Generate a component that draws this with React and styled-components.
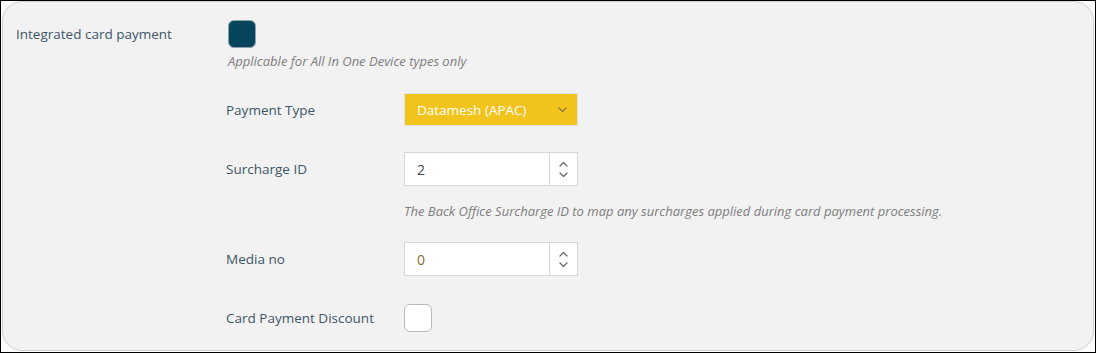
import React from "react";
import styled, { createGlobalStyle } from "styled-components";

const GlobalStyle = createGlobalStyle`
  html, body {
    margin: 0;
    padding: 0;
    background: #fff;
  }
  * {
    box-sizing: border-box;
  }
`;

const Frame = styled.div`
  width: 1096px;
  height: 353px;
  border: 1px solid #000;
  padding: 0 1px 1px 1px;
  background: #fff;
  display: flex;
`;

const Panel = styled.div`
  flex: 1;
  background: #f2f2f2;
  border: 1px solid #cdcdcd;
  border-radius: 20px;
  padding: 18px 13px;
  font-family: "Open Sans", "Liberation Sans", Arial, sans-serif;
  color: #3d5669;
`;

const TopRow = styled.div`
  display: grid;
  grid-template-columns: 212px 1fr;
`;

const Label = styled.div`
  font-size: 13.5px;
  line-height: 28px;
  color: #3d5669;
`;

const Stack = styled.div`
  display: flex;
  flex-direction: column;
  align-items: flex-start;
`;

const Check = styled.div`
  width: 28px;
  height: 28px;
  border-radius: 6px;
  border: 1px solid ${(p) => (p.$on ? "#8aa0ab" : "#b9b9b9")};
  background: ${(p) => (p.$on ? "#07445e" : "#fff")};
`;

const Hint = styled.div`
  font-size: 13px;
  font-style: italic;
  color: #7d7d7d;
  line-height: 16px;
  margin-top: ${(p) => p.$top || 0}px;
  margin-left: ${(p) => p.$left || 0}px;
`;

const Sub = styled.div`
  margin-left: 210px;
  margin-top: 24px;
  display: flex;
  flex-direction: column;
`;

const Row = styled.div`
  display: grid;
  grid-template-columns: 178px 174px;
  align-items: center;
  margin-top: ${(p) => p.$top || 0}px;
`;

const Select = styled.div`
  height: 33px;
  background: #f2c31c;
  border: 1px solid #e2e2e2;
  display: flex;
  align-items: center;
  justify-content: space-between;
  padding: 0 10px 0 12px;
  color: #fff;
  font-size: 13.5px;
`;

const NumberBox = styled.div`
  height: 34px;
  background: #fff;
  border: 1px solid #d6d6d6;
  display: flex;
`;

const NumberValue = styled.div`
  flex: 1;
  display: flex;
  align-items: center;
  padding-left: 12px;
  font-size: 14px;
  color: ${(p) => p.$color || "#444"};
`;

const Spinner = styled.div`
  width: 28px;
  border-left: 1px solid #d6d6d6;
  display: flex;
  flex-direction: column;
  align-items: center;
  justify-content: center;
  gap: 5px;
`;

const Chevron = ({ up, color = "#666" }) => (
  <svg width="9" height="6" viewBox="0 0 9 6">
    <path
      d={up ? "M1 5 L4.5 1.5 L8 5" : "M1 1 L4.5 4.5 L8 1"}
      fill="none"
      stroke={color}
      strokeWidth="1.2"
      strokeLinecap="round"
      strokeLinejoin="round"
    />
  </svg>
);

const NumberInput = ({ value, color }) => (
  <NumberBox>
    <NumberValue $color={color}>{value}</NumberValue>
    <Spinner>
      <Chevron up />
      <Chevron />
    </Spinner>
  </NumberBox>
);

export default function App() {
  return (
    <>
      <GlobalStyle />
      <Frame>
        <Panel>
          <TopRow>
            <Label>Integrated card payment</Label>
            <Stack>
              <Check $on />
              <Hint $top={5}>Applicable for All In One Device types only</Hint>
            </Stack>
          </TopRow>
          <Sub>
            <Row>
              <Label>Payment Type</Label>
              <Select>
                <span>Datamesh (APAC)</span>
                <Chevron color="#8a7a3a" />
              </Select>
            </Row>
            <Row $top={26}>
              <Label>Surcharge ID</Label>
              <NumberInput value="2" />
            </Row>
            <Hint $top={17} $left={178}>
              The Back Office Surcharge ID to map any surcharges applied during card payment processing.
            </Hint>
            <Row $top={23}>
              <Label>Media no</Label>
              <NumberInput value="0" color="#8a6a2a" />
            </Row>
            <Row $top={28}>
              <Label>Card Payment Discount</Label>
              <Check />
            </Row>
          </Sub>
        </Panel>
      </Frame>
    </>
  );
}
